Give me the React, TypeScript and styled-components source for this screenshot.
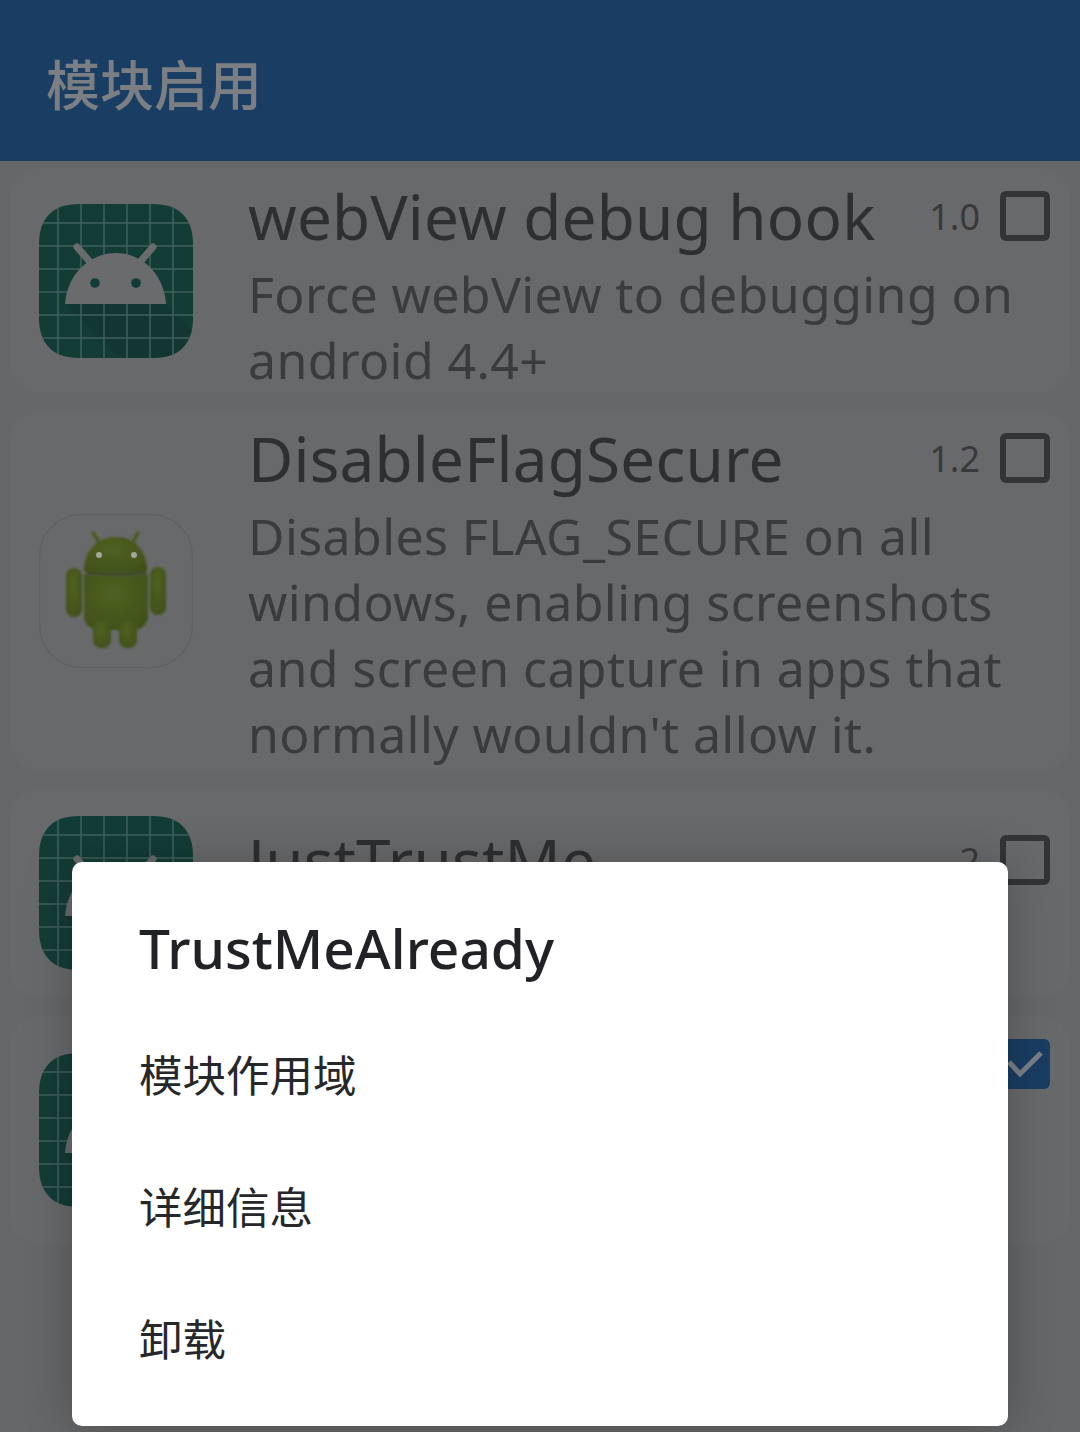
import React from 'react';
import styled, { createGlobalStyle } from 'styled-components';

const GlobalStyle = createGlobalStyle`
  html, body {
    margin: 0;
    padding: 0;
    background: #666768;
    overflow: hidden;
  }
  * { box-sizing: border-box; }
`;

const Screen = styled.div`
  position: relative;
  width: 1080px;
  height: 1432px;
  overflow: hidden;
  background: #666768;
  font-family: "Noto Sans", "Noto Sans CJK SC", sans-serif;
`;

const Toolbar = styled.header`
  height: 161px;
  background: #1a3d63;
  color: #7b7f83;
  display: flex;
  align-items: center;
  padding: 4px 46px 0;
  font-size: 54px;
  font-weight: 500;
`;

const List = styled.div`
  display: flex;
  flex-direction: column;
  gap: 19px;
  padding: 7px 10px 0;
`;

const Card = styled.div<{ $height: number; $offset: number }>`
  height: ${p => p.$height}px;
  display: grid;
  grid-template-columns: 154px 1fr;
  column-gap: 55px;
  padding: 0 20px 0 29px;
  border-radius: 30px;
  background: #68696a;

  & > div:last-child {
    padding-top: ${p => p.$offset}px;
  }
`;

const IconCell = styled.div`
  display: flex;
  align-items: center;
`;

const Body = styled.div`
  min-width: 0;
`;

const TitleRow = styled.div`
  display: flex;
  align-items: center;
  height: 80px;
`;

const Title = styled.div`
  flex: 1;
  font-size: 62px;
  line-height: 78px;
  letter-spacing: 0.2px;
  color: #2e2f31;
  white-space: nowrap;
`;

const Version = styled.span`
  font-size: 36px;
  color: #38393b;
  margin-right: 20px;
`;

const Box = styled.span<{ $checked?: boolean }>`
  width: 50px;
  height: 50px;
  border-radius: 6px;
  display: flex;
  align-items: center;
  justify-content: center;
  border: ${p => (p.$checked ? 'none' : '6px solid #333436')};
  background: ${p => (p.$checked ? '#1a3d63' : 'transparent')};
`;

const Description = styled.div`
  margin-top: 5px;
  font-size: 50px;
  line-height: 66px;
  letter-spacing: 0.4px;
  color: #3a3b3d;
`;

const Dialog = styled.div`
  position: absolute;
  left: 72px;
  top: 862px;
  width: 936px;
  height: 564px;
  background: #fff;
  border-radius: 10px;
  padding: 54px 67px 0;
  box-shadow: 0 4px 48px rgba(0, 0, 0, 0.25);
`;

const DialogTitle = styled.div`
  font-size: 55px;
  line-height: 64px;
  font-weight: 500;
  color: #212225;
  margin-bottom: 65px;
`;

const MenuItem = styled.div`
  font-size: 43.5px;
  line-height: 60px;
  height: 132px;
  color: #26272a;
`;

const squircle = 'M40 0H114C140 0 154 14 154 40V114C154 140 140 154 114 154H40C14 154 0 140 0 114V40C0 14 14 0 40 0Z';
const gridLines = [19, 42, 65, 88, 111, 134];

const StudioIcon: React.FC = () => (
  <svg width="154" height="154" viewBox="0 0 154 154">
    <clipPath id="squircle"><path d={squircle} /></clipPath>
    <path d={squircle} fill="#143c37" />
    <g clipPath="url(#squircle)">
      <path d="M26 100H127L154 127V154H80Z" fill="#0f312d" opacity="0.5" />
      <g stroke="#41605c" strokeWidth="1.5">
        {gridLines.map(v => <line key={`v${v}`} x1={v} y1="0" x2={v} y2="154" />)}
        {gridLines.map(v => <line key={`h${v}`} x1="0" y1={v} x2="154" y2={v} />)}
      </g>
    </g>
    <path d="M26 100C28 71 50 49 77 49C104 49 125 71 127 100Z" fill="#6a6b6c" />
    <path d="M38 43L51 58M114 43L101 58" stroke="#6a6b6c" strokeWidth="7" strokeLinecap="round" />
    <circle cx="56" cy="79" r="4.8" fill="#143c37" />
    <circle cx="97" cy="79" r="4.8" fill="#143c37" />
  </svg>
);

const DroidIcon: React.FC = () => (
  <svg width="154" height="154" viewBox="0 0 154 154">
    <defs>
      <filter id="soft"><feGaussianBlur stdDeviation="0.9" /></filter>
      <radialGradient id="olive" cx="45%" cy="35%" r="75%">
        <stop offset="0%" stopColor="#4f6122" />
        <stop offset="100%" stopColor="#3f4f18" />
      </radialGradient>
    </defs>
    <rect x="0.5" y="0.5" width="153" height="153" rx="42" fill="none" stroke="#5f6061" strokeWidth="1.2" />
    <g fill="url(#olive)" filter="url(#soft)">
      <path d="M54 19L61 30M99 19L93 30" stroke="#4a5b20" strokeWidth="3.5" strokeLinecap="round" />
      <path d="M45 57C45 36 59 23 77 23C95 23 108 36 108 57Q77 61 45 57Z" />
      <path d="M45 60Q77 64 109 60V102C109 110 102 116 94 116H60C52 116 45 110 45 102Z" />
      <rect x="27" y="54" width="16" height="49" rx="8" />
      <rect x="111" y="53" width="16" height="48" rx="8" />
      <rect x="54" y="106" width="18" height="28" rx="8" />
      <rect x="80" y="106" width="18" height="28" rx="8" />
      <path d="M47 58.5Q77 62.5 107 58.5" fill="none" stroke="#333e15" strokeWidth="2" />
    </g>
    <circle cx="60" cy="41" r="3" fill="#a3a69a" />
    <circle cx="95" cy="41" r="3" fill="#a3a69a" />
  </svg>
);

const CheckMark: React.FC = () => (
  <svg width="38" height="30" viewBox="0 0 38 30">
    <path d="M3 13L14 25L35 4" fill="none" stroke="#7b8188" strokeWidth="5" />
  </svg>
);

interface Module {
  id: string;
  name?: string;
  version?: string;
  description: string[];
  height: number;
  offset: number;
  icon: React.ReactNode;
  checked?: boolean;
}

// the last card sits behind the dialog, only its icon and checkbox show
const modules: Module[] = [
  {
    id: 'webview',
    name: 'webView debug hook',
    version: '1.0',
    description: ['Force webView to debugging on', 'android 4.4+'],
    height: 225,
    offset: 8,
    icon: <StudioIcon />,
  },
  {
    id: 'flagsecure',
    name: 'DisableFlagSecure',
    version: '1.2',
    description: [
      'Disables FLAG_SECURE on all',
      'windows, enabling screenshots',
      'and screen capture in apps that',
      "normally wouldn't allow it.",
    ],
    height: 358,
    offset: 6,
    icon: <DroidIcon />,
  },
  {
    id: 'justtrustme',
    name: 'JustTrustMe',
    version: '2',
    description: [],
    height: 208,
    offset: 31,
    icon: <StudioIcon />,
  },
  {
    id: 'trustmealready',
    description: [],
    height: 228,
    offset: 8,
    icon: <StudioIcon />,
    checked: true,
  },
];

export default function App() {
  return (
    <Screen>
      <GlobalStyle />
      <Toolbar>模块启用</Toolbar>
      <List>
        {modules.map(m => (
          <Card key={m.id} $height={m.height} $offset={m.offset}>
            <IconCell>{m.icon}</IconCell>
            <Body>
              <TitleRow>
                <Title>{m.name}</Title>
                <Version>{m.version}</Version>
                <Box $checked={m.checked}>{m.checked && <CheckMark />}</Box>
              </TitleRow>
              <Description>
                {m.description.map(line => <div key={line}>{line}</div>)}
              </Description>
            </Body>
          </Card>
        ))}
      </List>
      <Dialog>
        <DialogTitle>TrustMeAlready</DialogTitle>
        <MenuItem>模块作用域</MenuItem>
        <MenuItem>详细信息</MenuItem>
        <MenuItem>卸载</MenuItem>
      </Dialog>
    </Screen>
  );
}
